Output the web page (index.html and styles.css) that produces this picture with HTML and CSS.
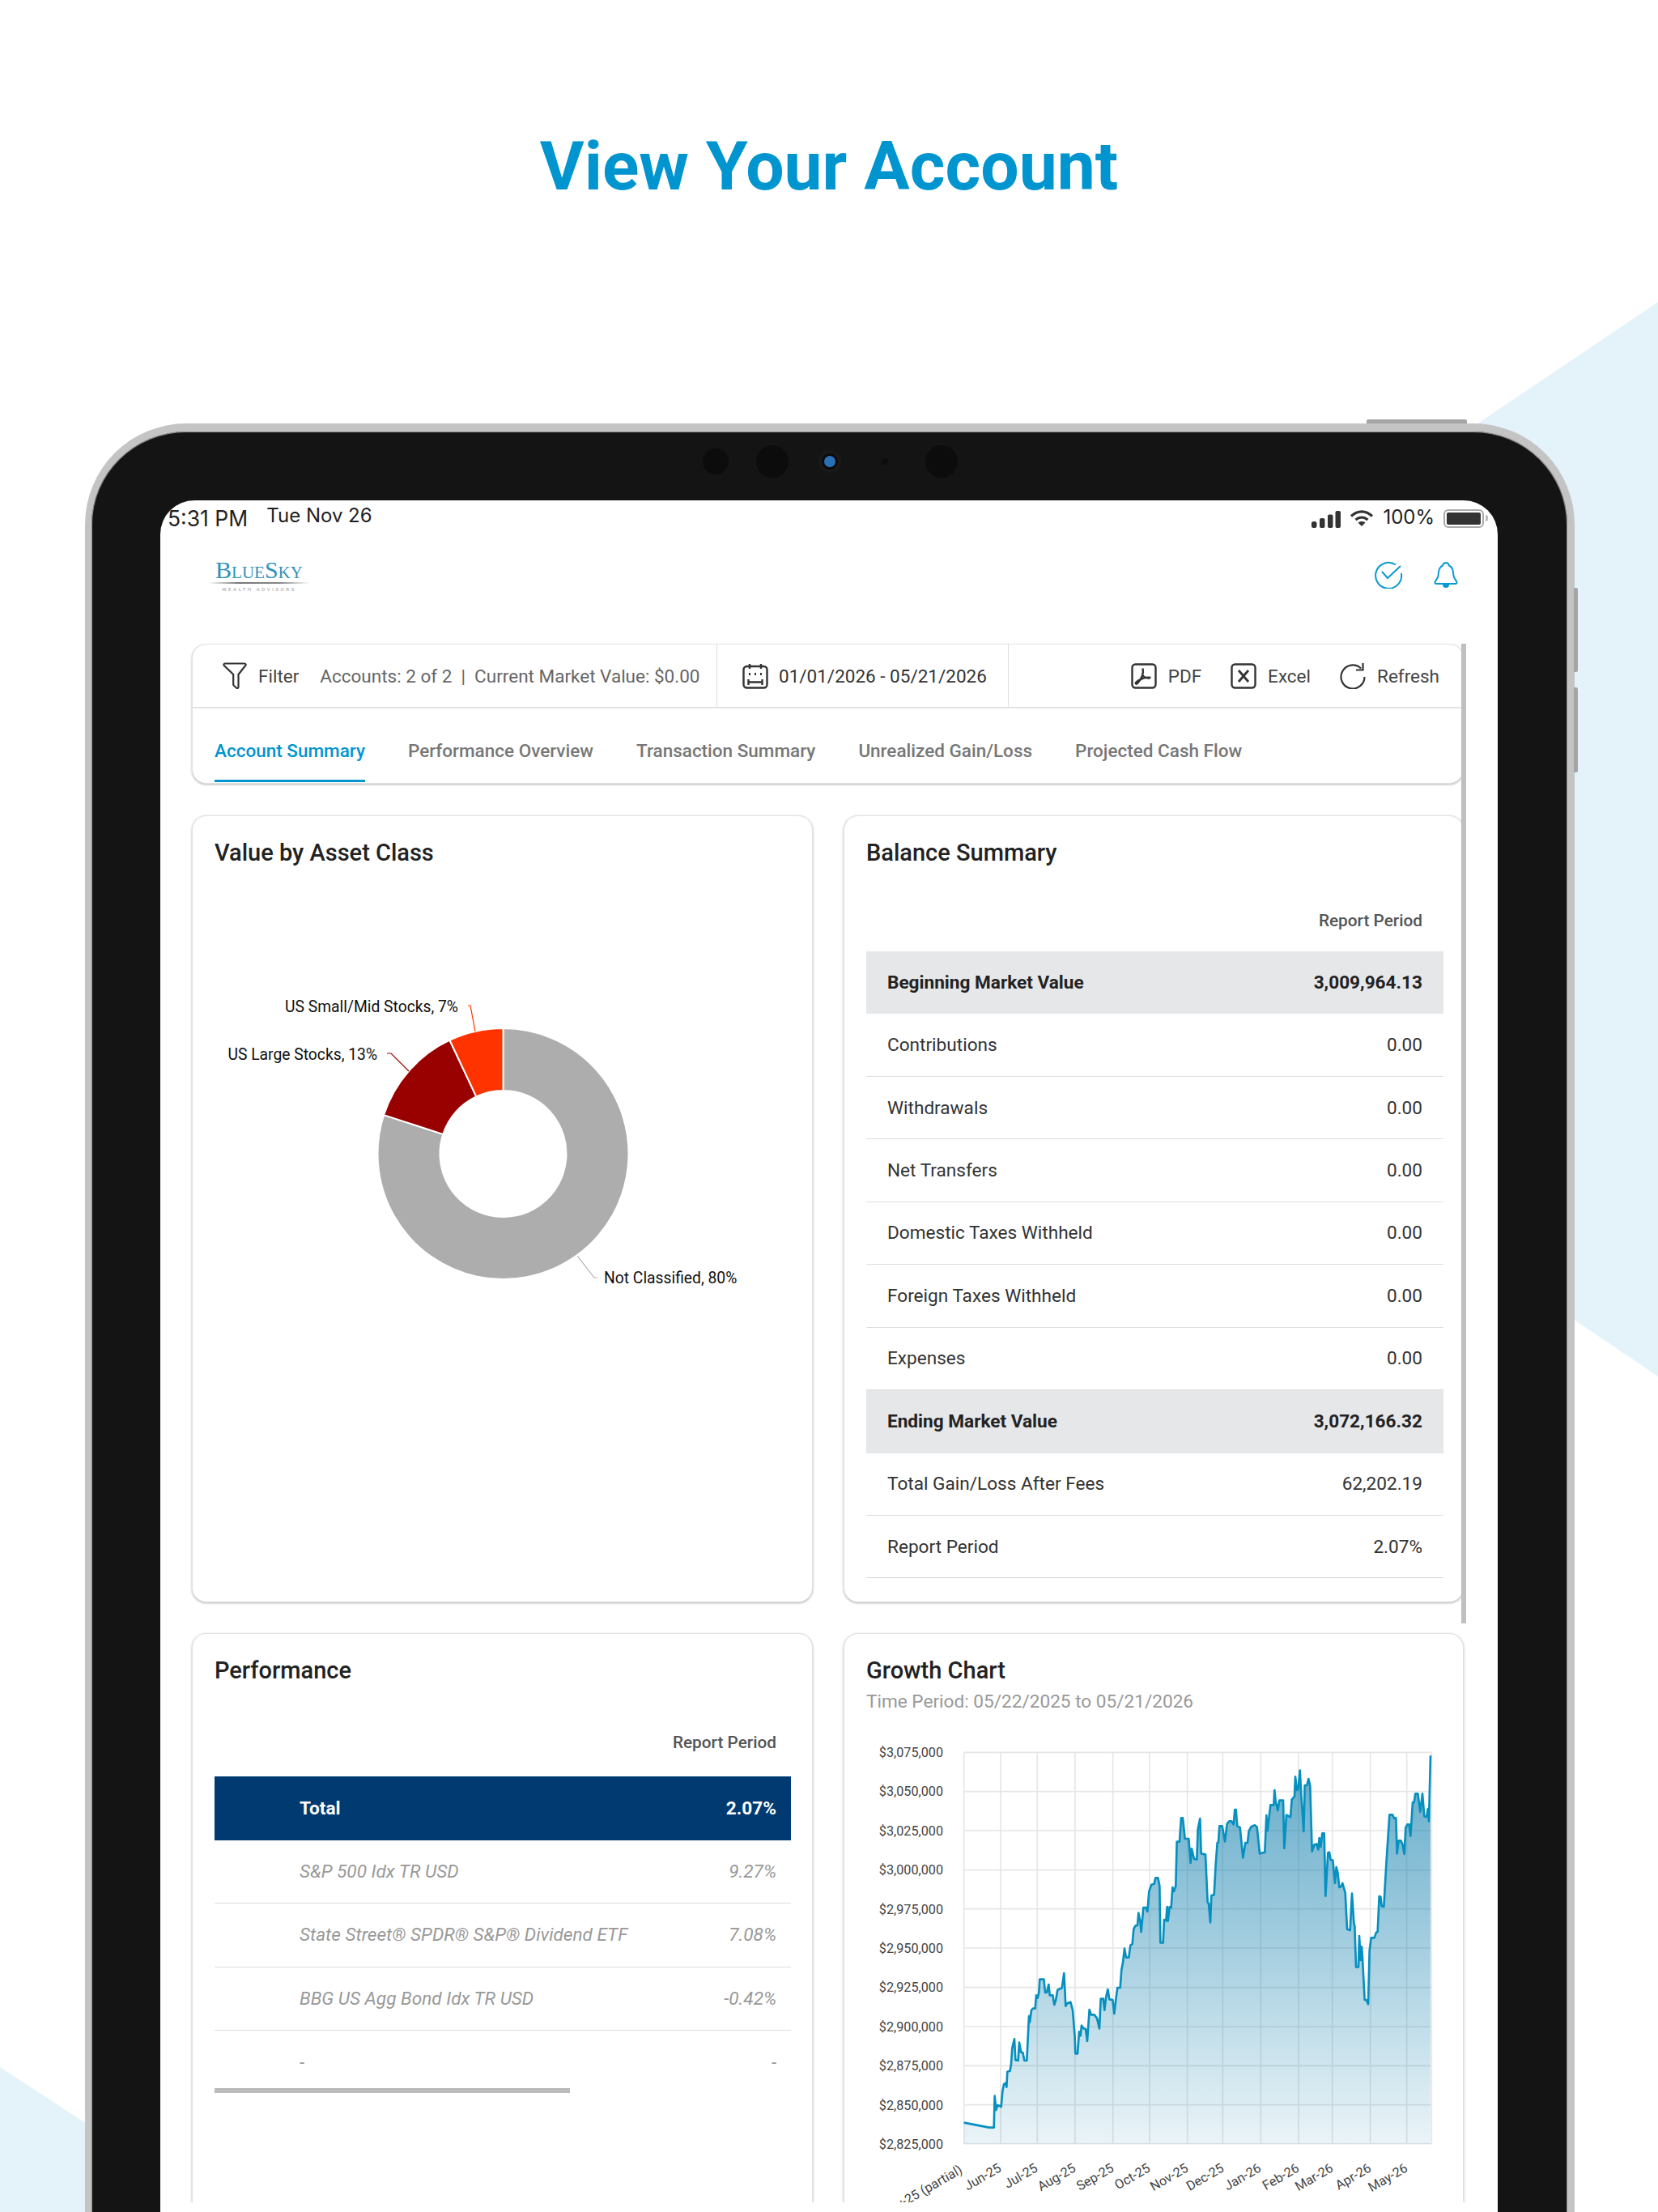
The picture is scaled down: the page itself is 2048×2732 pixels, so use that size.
FILE: index.html
```html
<!DOCTYPE html>
<html lang="en">
<head>
    <meta charset="UTF-8">
    <title>View Your Account</title>
    <link rel="stylesheet" href="styles.css">
</head>
<body>
    <svg class="backdrop" viewBox="0 0 2048 2732">
        <polygon points="1800,540 2048,373 2048,1700 1900,1600"/>
        <polygon points="0,2553 110,2625 110,2732 0,2732"/>
    </svg>

    <header class="hero">
        <h1>View Your Account</h1>
    </header>

    <div class="tablet">
        <span class="hw-btn hw-top"></span>
        <span class="hw-btn hw-vol1"></span>
        <span class="hw-btn hw-vol2"></span>

        <div class="bezel">
            <span class="lens lens-a"></span>
            <span class="lens lens-b"></span>
            <span class="lens lens-cam"></span>
            <span class="lens lens-dot"></span>
            <span class="lens lens-b"></span>
        </div>

        <div class="screen">
            <div class="statusbar">
                <span class="time">5:31 PM</span>
                <span class="date">Tue Nov 26</span>
                <span class="status-right">
                    <svg class="ic-signal" viewBox="0 0 36 21"><rect x="0" y="13" width="6.500" height="8" rx="2.500"/><rect x="10" y="9" width="6.500" height="12" rx="2"/><rect x="20" y="4.500" width="6.500" height="16.500" rx="2"/><rect x="29.500" y="0" width="6.500" height="21" rx="2"/></svg>
                    <svg class="ic-wifi" viewBox="0 0 30 20"><path d="M2 7.500C10 0 20 0 28 7.500M7.500 12C12 8 18 8 22.500 12" fill="none" stroke="#333" stroke-width="3.200"/><path d="M10.500 15.500L15 20l4.500-4.500C17 13.500 13 13.500 10.500 15.500z" fill="#333"/></svg>
                    <span class="batt-pct">100%</span>
                    <span class="battery"><span class="battery-fill"></span></span>
                    <span class="battery-cap"></span>
                </span>
            </div>

            <div class="apphead">
                <div class="logo">
                    <div class="logo-name">BlueSky</div>
                    <div class="logo-swoosh"></div>
                    <div class="logo-sub">WEALTH ADVISORS</div>
                </div>
                <div class="head-icons">
                    <svg class="ic-check" viewBox="0 0 36 34" fill="none" stroke="#0a9ad3" stroke-width="2"><path d="M27 4.500A16 16 0 1 0 33.900 15"/><path d="M10 13l7 8L33 6"/></svg>
                    <svg class="ic-bell" viewBox="0 0 30 34"><path d="M15 2c-2 0-3.500 1.500-4 3.500C6.500 7.500 6 12 5.500 18c-.4 4-4 6-4 8.500 0 1 .7 1.500 2 1.500h23c1.300 0 2-.5 2-1.500 0-2.500-3.600-4.500-4-8.500C24 12 23.500 7.500 19 5.500 18.500 3.500 17 2 15 2z" fill="none" stroke="#0a9ad3" stroke-width="2"/><path d="M11 29h8a4 4 0 0 1-8 0z" fill="#0a9ad3"/></svg>
                </div>
            </div>

            <div class="scrollbar"></div>

            <div class="content">
                <section class="toolbar">
                    <div class="tools">
                        <div class="tool-filter">
                            <svg class="ic-filter" viewBox="0 0 30 33" fill="none" stroke="#333" stroke-width="2.200"><path d="M3 1.500h24c1.500 0 2.200 1.500 1.200 2.500L19.500 15v15.500c0 1.500-1.500 2-2.500 1l-3-2.500c-.6-.5-.8-1-.8-1.800V15L1.800 4C.9 3 1.500 1.500 3 1.500z"/></svg>
                            <span class="filter-label">Filter</span>
                            <span class="filter-info">Accounts: 2 of 2 &nbsp;|&nbsp; Current Market Value: $0.00</span>
                        </div>
                        <div class="tool-date">
                            <svg class="ic-tool" viewBox="0 0 32 32" fill="none" stroke="#333" stroke-width="2.400"><rect x="1.500" y="4" width="29" height="26.500" rx="4"/><path d="M9 1v6M23 1v6M7.500 20v7M24.500 20v7M7.500 23.500h17"/><path d="M8 13.500h2M15 13.500h2M22 13.500h2" stroke-width="3"/></svg>
                            <span>01/01/2026 - 05/21/2026</span>
                        </div>
                        <div class="tool-actions">
                            <span class="action">
                                <svg class="ic-tool" viewBox="0 0 32 32" fill="none" stroke="#333" stroke-width="2.400"><rect x="1.500" y="1.500" width="29" height="29" rx="4"/><path d="M14.500 6.500c1.500 6-1.500 13-6.500 18.500-1.500 1.500-3 0-1.500-1.500 4-3.500 12-7 18-5.500"/><path d="M14.500 15c1.500 2.500 4 4 9 3.500"/></svg>
                                PDF
                            </span>
                            <span class="action">
                                <svg class="ic-tool" viewBox="0 0 32 32" fill="none" stroke="#333" stroke-width="2.400"><rect x="1.500" y="1.500" width="29" height="29" rx="4"/><path d="M10 9l12 14M22 9L10 23" stroke-width="2.800"/></svg>
                                Excel
                            </span>
                            <span class="action">
                                <svg class="ic-tool" viewBox="0 0 32 32" fill="none" stroke="#333" stroke-width="2.200"><path d="M30.500 17A14.500 14.500 0 1 1 26 6.500"/><path d="M28.500 0v8.500h-8.500"/></svg>
                                Refresh
                            </span>
                        </div>
                    </div>
                    <nav class="tabs">
                        <a class="tab tab-active">Account Summary</a>
                        <a class="tab">Performance Overview</a>
                        <a class="tab">Transaction Summary</a>
                        <a class="tab">Unrealized Gain/Loss</a>
                        <a class="tab">Projected Cash Flow</a>
                    </nav>
                </section>

                <div class="cards">
                    <section class="card card-tall">
                        <h2>Value by Asset Class</h2>
                        <svg class="donut" viewBox="0 0 713 600">
                            <g transform="translate(356.500 324)" stroke="#fff" stroke-width="2" stroke-linejoin="round">
                                <path d="M0 -155A155 155 0 1 1 -147.400 -47.900L-74.200 -24.100A78 78 0 1 0 0 -78z" fill="#adadad"/>
                                <path d="M-147.400 -47.900A155 155 0 0 1 -66 -140.300L-33.200 -70.600A78 78 0 0 0 -74.200 -24.100z" fill="#990000"/>
                                <path d="M-66 -140.300A155 155 0 0 1 0 -155L0 -78A78 78 0 0 0 -33.200 -70.600z" fill="#ff3300"/>
                            </g>
                            <g fill="none" stroke-width="1.200">
                                <polyline points="322,173 316,141 313,141" stroke="#ff3300"/>
                                <polyline points="240,222 218,200 213,200" stroke="#990000"/>
                                <polyline points="448,450 469,477 473,477" stroke="#adadad"/>
                            </g>
                            <g class="donut-labels">
                                <text x="301" y="149" text-anchor="end">US Small/Mid Stocks, 7%</text>
                                <text x="201" y="208" text-anchor="end">US Large Stocks, 13%</text>
                                <text x="481" y="484">Not Classified, 80%</text>
                            </g>
                        </svg>
                    </section>

                    <section class="card card-tall balance">
                        <h2>Balance Summary</h2>
                        <div class="period">Report Period</div>
                        <div class="brow brow-hi"><span>Beginning Market Value</span><span>3,009,964.13</span></div>
                        <div class="brow"><span>Contributions</span><span>0.00</span></div>
                        <div class="brow"><span>Withdrawals</span><span>0.00</span></div>
                        <div class="brow"><span>Net Transfers</span><span>0.00</span></div>
                        <div class="brow"><span>Domestic Taxes Withheld</span><span>0.00</span></div>
                        <div class="brow"><span>Foreign Taxes Withheld</span><span>0.00</span></div>
                        <div class="brow"><span>Expenses</span><span>0.00</span></div>
                        <div class="brow brow-hi"><span>Ending Market Value</span><span>3,072,166.32</span></div>
                        <div class="brow"><span>Total Gain/Loss After Fees</span><span>62,202.19</span></div>
                        <div class="brow"><span>Report Period</span><span>2.07%</span></div>
                    </section>

                    <section class="card performance">
                        <h2>Performance</h2>
                        <div class="period">Report Period</div>
                        <div class="prow prow-total"><span>Total</span><span>2.07%</span></div>
                        <div class="prow"><span>S&amp;P 500 Idx TR USD</span><span>9.27%</span></div>
                        <div class="prow"><span>State Street® SPDR® S&amp;P® Dividend ETF</span><span>7.08%</span></div>
                        <div class="prow"><span>BBG US Agg Bond Idx TR USD</span><span>-0.42%</span></div>
                        <div class="prow prow-last"><span>-</span><span>-</span></div>
                        <div class="hscroll"></div>
                    </section>

                    <section class="card growth">
                        <h2>Growth Chart</h2>
                        <div class="subtitle">Time Period: 05/22/2025 to 05/21/2026</div>
                        <svg class="chart" viewBox="0 0 720 580">
                            <defs>
                                <linearGradient id="areaFill" x1="0" y1="0" x2="0" y2="1">
                                    <stop offset="0" stop-color="#0076a8" stop-opacity=".62"/>
                                    <stop offset="1" stop-color="#0076a8" stop-opacity=".08"/>
                                </linearGradient>
                            </defs>
                            <g transform="translate(109 15) scale(.33333)">
                                <path class="grid" d="M17 25H1750M17 170H1750M17 315H1750M17 461H1750M17 605H1750M17 750H1750M17 896H1750M17 1041H1750M17 1186H1750M17 1331H1750M17 1475H1750M17 25V1475M153 25V1475M289 25V1475M429 25V1475M569 25V1475M705 25V1475M845 25V1475M976 25V1475M1117 25V1475M1257 25V1475M1382 25V1475M1523 25V1475M1658 25V1475M1750 25V1475"/>
                                <polygon fill="url(#areaFill)" points="17,1475 17,1397 110,1415 128,1415 131,1298 136,1350 142,1332 155,1338 160,1280 165,1255 172,1250 175,1265 178,1208 188,1205 192,1180 196,1120 204,1087 208,1165 218,1167 222,1100 229,1137 235,1137 241,1167 250,1167 258,1002 261,1025 267,980 273,974 281,974 285,925 290,935 295,915 298,866 313,866 318,915 324,915 331,885 335,925 346,925 352,960 358,940 364,905 380,898 388,843 394,965 400,955 412,950 420,980 428,1080 430,1141 438,1141 444,1060 449,1075 453,1037 460,1048 468,1050 474,1095 482,978 488,997 500,997 510,1010 519,1048 524,938 533,938 538,980 543,935 550,903 556,940 568,942 574,993 582,925 586,897 596,897 601,830 606,805 612,752 618,785 628,785 634,740 641,735 646,680 652,668 660,666 664,620 670,650 674,690 682,600 692,600 697,615 703,540 712,515 722,512 727,490 736,490 742,520 745,730 755,730 759,645 766,648 770,597 773,650 779,598 785,600 790,525 795,540 802,520 806,356 816,356 822,268 828,268 836,345 850,345 857,435 861,382 870,420 880,422 884,310 892,270 896,400 912,403 920,580 924,585 930,655 934,555 944,553 950,440 956,360 960,358 964,298 974,298 984,355 992,290 1000,280 1008,280 1016,292 1021,237 1025,237 1030,298 1040,303 1051,415 1060,360 1068,360 1073,316 1082,300 1095,295 1103,302 1113,400 1132,395 1138,258 1142,315 1153,220 1165,220 1168,165 1172,205 1180,240 1186,203 1200,203 1204,380 1212,257 1227,265 1232,200 1242,188 1245,115 1251,165 1256,160 1262,92 1268,200 1276,318 1280,147 1288,147 1294,123 1300,150 1307,392 1315,367 1325,365 1330,385 1334,342 1339,375 1345,325 1352,325 1357,557 1366,397 1371,395 1376,423 1384,425 1392,510 1397,450 1402,470 1408,525 1415,522 1420,510 1430,545 1437,680 1448,684 1455,548 1462,655 1465,670 1470,820 1479,820 1482,705 1487,795 1491,745 1494,790 1502,942 1508,942 1515,958 1520,760 1526,712 1538,712 1545,692 1550,690 1556,558 1561,560 1565,595 1573,597 1582,440 1594,256 1605,256 1612,270 1618,268 1622,400 1628,352 1636,352 1642,365 1649,402 1654,305 1660,292 1667,292 1672,335 1680,210 1685,210 1690,178 1699,178 1708,245 1716,178 1723,262 1732,264 1736,235 1740,280 1746,37 1746,1475"/>
                                <polyline class="series" points="17,1397 110,1415 128,1415 131,1298 136,1350 142,1332 155,1338 160,1280 165,1255 172,1250 175,1265 178,1208 188,1205 192,1180 196,1120 204,1087 208,1165 218,1167 222,1100 229,1137 235,1137 241,1167 250,1167 258,1002 261,1025 267,980 273,974 281,974 285,925 290,935 295,915 298,866 313,866 318,915 324,915 331,885 335,925 346,925 352,960 358,940 364,905 380,898 388,843 394,965 400,955 412,950 420,980 428,1080 430,1141 438,1141 444,1060 449,1075 453,1037 460,1048 468,1050 474,1095 482,978 488,997 500,997 510,1010 519,1048 524,938 533,938 538,980 543,935 550,903 556,940 568,942 574,993 582,925 586,897 596,897 601,830 606,805 612,752 618,785 628,785 634,740 641,735 646,680 652,668 660,666 664,620 670,650 674,690 682,600 692,600 697,615 703,540 712,515 722,512 727,490 736,490 742,520 745,730 755,730 759,645 766,648 770,597 773,650 779,598 785,600 790,525 795,540 802,520 806,356 816,356 822,268 828,268 836,345 850,345 857,435 861,382 870,420 880,422 884,310 892,270 896,400 912,403 920,580 924,585 930,655 934,555 944,553 950,440 956,360 960,358 964,298 974,298 984,355 992,290 1000,280 1008,280 1016,292 1021,237 1025,237 1030,298 1040,303 1051,415 1060,360 1068,360 1073,316 1082,300 1095,295 1103,302 1113,400 1132,395 1138,258 1142,315 1153,220 1165,220 1168,165 1172,205 1180,240 1186,203 1200,203 1204,380 1212,257 1227,265 1232,200 1242,188 1245,115 1251,165 1256,160 1262,92 1268,200 1276,318 1280,147 1288,147 1294,123 1300,150 1307,392 1315,367 1325,365 1330,385 1334,342 1339,375 1345,325 1352,325 1357,557 1366,397 1371,395 1376,423 1384,425 1392,510 1397,450 1402,470 1408,525 1415,522 1420,510 1430,545 1437,680 1448,684 1455,548 1462,655 1465,670 1470,820 1479,820 1482,705 1487,795 1491,745 1494,790 1502,942 1508,942 1515,958 1520,760 1526,712 1538,712 1545,692 1550,690 1556,558 1561,560 1565,595 1573,597 1582,440 1594,256 1605,256 1612,270 1618,268 1622,400 1628,352 1636,352 1642,365 1649,402 1654,305 1660,292 1667,292 1672,335 1680,210 1685,210 1690,178 1699,178 1708,245 1716,178 1723,262 1732,264 1736,235 1740,280 1746,37"/>
                            </g>
                            <g class="axis-y" text-anchor="end">
                                <text x="89" y="29">$3,075,000</text>
                                <text x="89" y="77">$3,050,000</text>
                                <text x="89" y="126">$3,025,000</text>
                                <text x="89" y="174">$3,000,000</text>
                                <text x="89" y="223">$2,975,000</text>
                                <text x="89" y="271">$2,950,000</text>
                                <text x="89" y="319">$2,925,000</text>
                                <text x="89" y="368">$2,900,000</text>
                                <text x="89" y="416">$2,875,000</text>
                                <text x="89" y="465">$2,850,000</text>
                                <text x="89" y="513">$2,825,000</text>
                            </g>
                            <g class="axis-x" text-anchor="end">
                                <text transform="translate(114 542) rotate(-30)">May-25 (partial)</text>
                                <text transform="translate(162 540) rotate(-30)">Jun-25</text>
                                <text transform="translate(207 540) rotate(-30)">Jul-25</text>
                                <text transform="translate(254 540) rotate(-30)">Aug-25</text>
                                <text transform="translate(301 540) rotate(-30)">Sep-25</text>
                                <text transform="translate(346 540) rotate(-30)">Oct-25</text>
                                <text transform="translate(393 540) rotate(-30)">Nov-25</text>
                                <text transform="translate(437 540) rotate(-30)">Dec-25</text>
                                <text transform="translate(483 540) rotate(-30)">Jan-26</text>
                                <text transform="translate(530 540) rotate(-30)">Feb-26</text>
                                <text transform="translate(572 540) rotate(-30)">Mar-26</text>
                                <text transform="translate(619 540) rotate(-30)">Apr-26</text>
                                <text transform="translate(664 540) rotate(-30)">May-26</text>
                            </g>
                        </svg>
                    </section>
                </div>
            </div>
        </div>
    </div>
</body>
</html>
```

FILE: styles.css
```css
html, body {
    margin: 0;
    padding: 0;
}

body {
    position: relative;
    width: 2048px;
    height: 2732px;
    overflow: hidden;
    background: #fff;
    color: #333;
    font-family: Roboto, "Liberation Sans", sans-serif;
}

.backdrop {
    position: absolute;
    top: 0;
    left: 0;
    width: 2048px;
    height: 2732px;
    fill: #e4f3f9;
}

.hero {
    position: relative;
    height: 523px;
    padding-top: 156px;
    box-sizing: border-box;
    text-align: center;
}

h1 {
    margin: 0;
    font-size: 84px;
    line-height: 100px;
    font-weight: 700;
    color: #0095cf;
}

/* device frame */
.tablet {
    position: relative;
    box-sizing: border-box;
    width: 1840px;
    height: 2300px;
    margin-left: 105px;
    background: #141414;
    border: solid #c4c4c4;
    border-width: 10px 9px 0 8px;
    border-radius: 125px 125px 0 0;
    box-shadow: inset 0 0 0 1px #8a8a8a;
}

.hw-btn {
    position: absolute;
    background: #a5a5a5;
}

.hw-top {
    top: -15px;
    left: 1575px;
    width: 124px;
    height: 5px;
    border-radius: 2px 2px 0 0;
}

.hw-vol1, .hw-vol2 {
    left: 1831px;
    width: 5px;
    border-radius: 0 2px 2px 0;
}

.hw-vol1 {
    top: 193px;
    height: 104px;
}

.hw-vol2 {
    top: 316px;
    height: 105px;
}

.bezel {
    display: flex;
    align-items: center;
    height: 85px;
    padding: 0 0 11px 755px;
    box-sizing: border-box;
}

.lens {
    flex: none;
    border-radius: 50%;
    background: #0c0c0c;
}

.lens-a {
    width: 32px;
    height: 32px;
    margin-right: 34px;
}

.lens-b {
    width: 40px;
    height: 40px;
    margin-right: 44px;
}

.lens-cam {
    width: 14px;
    height: 14px;
    margin-right: 57px;
    background: #2a70b5;
    box-shadow: 0 0 0 3px #0a0a0a, 0 0 0 7px #191919;
}

.lens-dot {
    width: 8px;
    height: 8px;
    margin-right: 46px;
}

.screen {
    position: relative;
    width: 1652px;
    margin-left: 85px;
    height: 2114px;
    background: #fff;
    border-radius: 42px 42px 0 0;
    overflow: hidden;
}

/* ios status bar */
.statusbar {
    display: flex;
    align-items: center;
    height: 40px;
    padding: 0 12px 0 9px;
    font-family: Inter, sans-serif;
    color: #222;
}

.time {
    font-size: 26.500px;
    margin: 3px 23px 0 0;
}

.date {
    font-size: 24px;
    margin-top: -3px;
}

.status-right {
    display: flex;
    align-items: center;
    margin-left: auto;
}

.ic-signal {
    width: 36px;
    height: 21px;
    fill: #333;
    margin: 6px 11px 0 0;
}

.ic-wifi {
    width: 30px;
    height: 20px;
    margin: 4px 11px 0 0;
}

.batt-pct {
    font-size: 24px;
    margin-right: 11px;
}

.battery {
    box-sizing: border-box;
    width: 50px;
    height: 23px;
    padding: 2px;
    border: 2px solid #aaa;
    border-radius: 6px;
    margin-top: 4px;
}

.battery-fill {
    display: block;
    height: 100%;
    background: #333;
    border-radius: 2px;
}

.battery-cap {
    width: 3px;
    height: 8px;
    margin: 4px 0 0 2px;
    background: #bbb;
    border-radius: 0 3px 3px 0;
}

.apphead {
    display: flex;
    justify-content: space-between;
    height: 137px;
    padding: 31px 49px 0 59px;
    box-sizing: border-box;
}

.logo {
    width: 126px;
    text-align: center;
}

.logo-name {
    font-family: "Liberation Serif", serif;
    font-variant: small-caps;
    font-size: 30px;
    line-height: 30px;
    color: #2f93b8;
}

.logo-swoosh {
    height: 2px;
    background: linear-gradient(90deg, transparent, #777 30%, #888 70%, transparent);
}

.logo-sub {
    margin-top: 3px;
    font-size: 6px;
    line-height: 7px;
    letter-spacing: 2.600px;
    color: #999;
    white-space: nowrap;
}

.head-icons {
    display: flex;
    align-items: flex-start;
    gap: 38px;
    padding-top: 4px;
}

.ic-check {
    width: 36px;
    height: 34px;
}

.ic-bell {
    width: 30px;
    height: 34px;
}

.scrollbar {
    position: absolute;
    top: 177px;
    right: 39px;
    width: 6px;
    height: 1210px;
    background: #c0c0c0;
    z-index: 2;
}

.content {
    height: 1925px;
    padding: 0 42px 0 39px;
    overflow: hidden;
}

/* toolbar card */
.toolbar, .card {
    background: #fff;
    border: 1px solid #e2e2e2;
    border-radius: 18px;
    box-shadow: 0 1px 3px rgba(0, 0, 0, .3);
}

.toolbar {
    height: 173px;
    box-sizing: border-box;
}

.tools {
    display: flex;
    align-items: stretch;
    height: 77px;
    border-bottom: 2px solid #e4e4e4;
    font-size: 22.500px;
    color: #444;
}

.tools svg {
    flex: none;
}

.tool-filter, .tool-date, .tool-actions {
    display: flex;
    align-items: center;
}

.tool-filter {
    width: 648px;
    padding-left: 37px;
    box-sizing: border-box;
    border-right: 1px solid #ddd;
}

.ic-filter {
    width: 30px;
    height: 33px;
    margin-right: 14px;
}

.filter-label {
    margin-right: 26px;
    color: #444;
}

.filter-info {
    color: #666;
    white-space: nowrap;
}

.tool-date {
    width: 360px;
    padding-left: 31px;
    box-sizing: border-box;
    gap: 13px;
    border-right: 1px solid #ddd;
    white-space: nowrap;
    color: #333;
}

.ic-tool {
    width: 32px;
    height: 32px;
}

.tool-actions {
    flex: 1;
    justify-content: flex-end;
    gap: 36px;
    padding-right: 29px;
}

.action {
    display: flex;
    align-items: center;
    gap: 14px;
}

.tabs {
    display: flex;
    gap: 53px;
    height: 93px;
    padding-left: 27px;
    font-size: 22.500px;
    font-weight: 500;
    color: #777;
}

.tab {
    box-sizing: border-box;
    height: 91px;
    padding-top: 37px;
    line-height: 30px;
    white-space: nowrap;
}

.tab-active {
    color: #0095d0;
    border-bottom: 3px solid #0095d0;
}

/* dashboard grid */
.cards {
    display: grid;
    grid-template-columns: 767px 766px;
    grid-template-rows: 972px 760px;
    gap: 38px;
    margin-top: 39px;
}

.card {
    box-sizing: border-box;
    padding: 29px 24px 0 27px;
}

h2 {
    margin: 0;
    font-size: 29px;
    line-height: 32px;
    font-weight: 500;
    color: #222;
}

.donut {
    display: block;
    width: 713px;
    height: 600px;
    margin-top: 32px;
}

.donut-labels {
    font-size: 19.300px;
    fill: #111;
}

.period {
    text-align: right;
    font-size: 20.800px;
    line-height: 24px;
    font-weight: 500;
    color: #555;
}

.balance .period {
    padding: 56px 26px 26px 0;
}

.brow {
    display: flex;
    justify-content: space-between;
    align-items: center;
    height: 77.450px;
    padding: 0 26px;
    border-bottom: 1px solid #ddd;
    box-sizing: border-box;
    font-size: 22.600px;
}

.brow-hi {
    background: #e6e7e9;
    font-weight: 700;
    color: #222;
    border-bottom: 0;
}

.performance {
    padding-right: 26px;
}

.performance .period {
    padding: 61px 18px 30px 0;
}

.prow {
    display: flex;
    justify-content: space-between;
    align-items: center;
    box-sizing: border-box;
    height: 78.500px;
    padding: 0 18px 0 105px;
    border-bottom: 1px solid #ddd;
    font-size: 22.600px;
    font-style: italic;
    color: #999;
}

.prow-total {
    background: #003a70;
    color: #fff;
    font-style: normal;
    font-weight: 700;
    border-bottom: 0;
}

.prow-last {
    border-bottom: 0;
}

.hscroll {
    width: 439px;
    height: 6px;
    background: #bbb;
    margin-top: -8px;
}

.subtitle {
    margin-top: 9px;
    font-size: 22.600px;
    line-height: 28px;
    color: #999;
}

.chart {
    display: block;
    width: 720px;
    height: 580px;
    margin: 25px 0 0 6px;
}

.grid {
    fill: none;
    stroke: #e6e6e6;
    stroke-width: 5;
}

.series {
    fill: none;
    stroke: #0590c0;
    stroke-width: 8;
    stroke-linejoin: round;
}

.axis-y, .axis-x {
    font-size: 16.200px;
    fill: #444;
}
```
